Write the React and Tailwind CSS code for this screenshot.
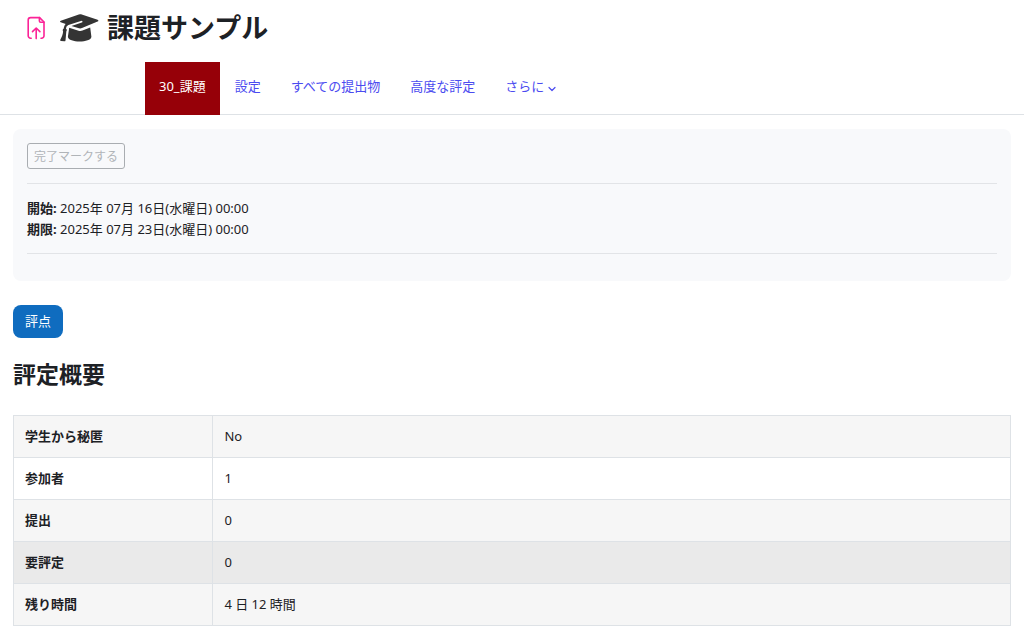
import React from "react";

const tabs = ["設定", "すべての提出物", "高度な評定"];

const rows = [
  { label: "学生から秘匿", value: "No", bg: "bg-[#f6f6f6]" },
  { label: "参加者", value: "1", bg: "bg-white" },
  { label: "提出", value: "0", bg: "bg-[#f6f6f6]" },
  { label: "要評定", value: "0", bg: "bg-[#eaeaea]" },
  { label: "残り時間", value: "4 日 12 時間", bg: "bg-[#f6f6f6]" },
];

function SubmitIcon() {
  return (
    <svg className="h-6 w-[18px]" viewBox="0 0 18 24" fill="none" stroke="#fb2397" strokeWidth="1.6" strokeLinecap="round" strokeLinejoin="round" aria-hidden="true">
      <path d="M4.200 22.200H3.600A2.400 2.400 0 0 1 1.200 19.800V4A2.400 2.400 0 0 1 3.600 1.600H12.600L17 6V19.800A2.400 2.400 0 0 1 14.600 22.200H14" />
      <path d="M12.400 1.600V5.100A1.200 1.200 0 0 0 13.600 6.300H17" />
      <path d="M9.200 22.600V12.400M5.500 15.600 9.200 12 12.900 15.600" />
    </svg>
  );
}

function CapIcon() {
  return (
    <svg className="h-7 w-10" viewBox="0 0 40 28" fill="#343434" aria-hidden="true">
      <path d="M19.800.4Q20.800 0 22 .3L38.600 5.800Q40.200 6.600 38.600 7.500L23 14.100Q21.500 14.700 20 14.300L12.400 11.900 22.800 8.500Q23.800 8 23.400 7.300 22.900 6.700 21.900 6.900L9.400 10.900Q7.300 11.700 6.900 14.500 8.500 15.800 7.300 17.400L6.500 26.400Q6.300 27.300 5.400 27.300L2 26.900Q.9 26.700 1.300 25.700C3 22.500 3.900 20 4.100 17.400Q3.100 15.800 4.700 14.600C4.900 12.500 5.600 11 6.700 10L1.700 8.300Q.3 7.500 1.800 6.700Z" />
      <path d="M10.200 13.700 19.500 16.700Q21.500 17.300 23.500 16.600L31.200 13.400 32.400 22.700C32 26 26.500 27.400 20.600 27.400S9.300 26 8.900 22.700Z" />
    </svg>
  );
}

export default function App() {
  return (
    <div className="bg-white pb-3 font-['Noto_Sans','Noto_Sans_CJK_JP',sans-serif] text-[13px] leading-[21px] text-[#1d2125]" lang="ja">
      <header>
        <div className="flex h-[62px] items-start px-[27px] pt-[13px]">
          <div className="flex h-[30px] items-center">
            <SubmitIcon />
            <span className="ml-[14px] flex">
              <CapIcon />
            </span>
            <h1 className="ml-2 text-[27px] leading-[30px] font-bold">課題サンプル</h1>
          </div>
        </div>
        <nav className="border-b border-[#dee2e6]" aria-label="課題">
          <ul className="mx-auto -mb-px flex max-w-[734px]">
            <li>
              <a href="#assign" aria-current="page" className="flex h-[53px] items-center bg-[#960008] px-[14px] pb-1 text-white">
                30_課題
              </a>
            </li>
            {tabs.map((tab) => (
              <li key={tab}>
                <a href="#tab" className="flex h-[53px] items-center px-[15px] pb-1 text-[#4b4bf0]">
                  {tab}
                </a>
              </li>
            ))}
            <li>
              <button type="button" className="flex h-[53px] items-center gap-1 px-[15px] pb-1 text-[#4b4bf0]">
                さらに
                <svg className="mt-1 h-2 w-2" viewBox="0 0 8 8" fill="none" stroke="currentColor" strokeWidth="1.200" strokeLinecap="round" strokeLinejoin="round" aria-hidden="true">
                  <path d="M1 2.500 4 5.500 7 2.500" />
                </svg>
              </button>
            </li>
          </ul>
        </nav>
      </header>

      <main className="px-[13px] pt-[14px]">
        <section className="rounded-lg bg-[#f8f9fb] px-[14px] pt-[14px] pb-[27px]">
          <button type="button" disabled className="block rounded-[3px] border border-[#a9adb1] px-[6px] pt-1 pb-[2px] text-[12px] leading-[18px] text-[#b0b4b8]">
            完了マークする
          </button>
          <div className="mt-[14px] border-y border-[#e2e4e7] pt-[14px] pb-[13px]">
            <p>
              <strong>開始:</strong> 2025年 07月 16日(水曜日) 00:00
            </p>
            <p>
              <strong>期限:</strong> 2025年 07月 23日(水曜日) 00:00
            </p>
          </div>
        </section>

        <a href="#grade" className="mt-6 inline-block rounded-lg bg-[#0f6cbf] px-3 py-[6px] text-white">
          評点
        </a>

        <h2 className="mt-5 text-[23px] leading-8 font-bold">評定概要</h2>

        <table className="mt-[25px] w-full table-fixed border-collapse text-left">
          <tbody>
            {rows.map((row) => (
              <tr key={row.label} className={row.bg}>
                <th scope="row" className="w-1/5 border border-[#dee2e6] px-[11px] py-[10px] font-bold">
                  {row.label}
                </th>
                <td className="border border-[#dee2e6] px-[11px] py-[10px]">{row.value}</td>
              </tr>
            ))}
          </tbody>
        </table>
      </main>
    </div>
  );
}
